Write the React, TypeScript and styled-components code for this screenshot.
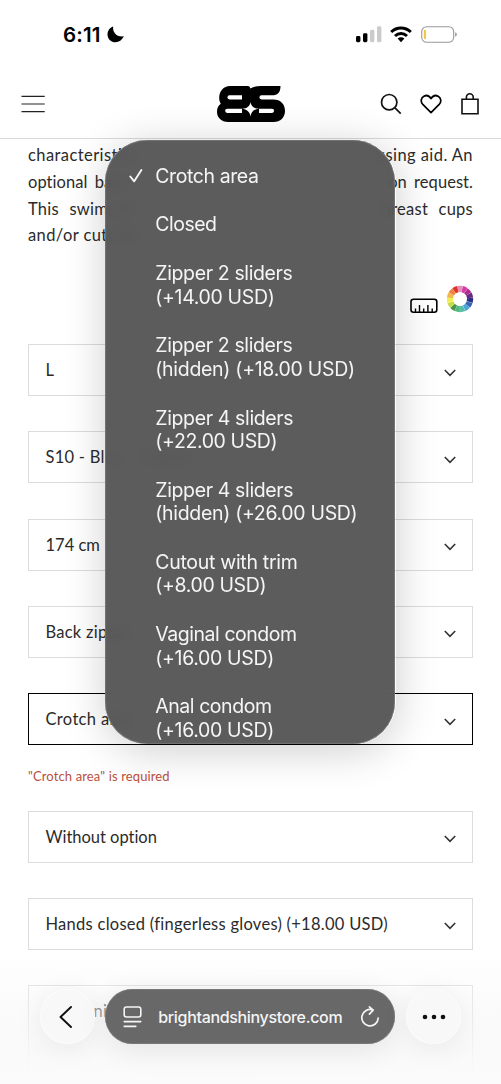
import React from "react";
import styled, { createGlobalStyle } from "styled-components";

const GlobalStyle = createGlobalStyle`
  * { box-sizing: border-box; }
  body { margin: 0; background: #fff; }
`;

const Screen = styled.main`
  position: relative;
  width: 501px;
  height: 1084px;
  overflow: hidden;
  background: #fff;
  color: #2b2b2b;
  font-family: Lato, "Noto Sans", sans-serif;
`;

const StatusBar = styled.div`
  display: flex;
  align-items: center;
  height: 69px;
  padding: 0 44.5px 0 63px;
`;

const Clock = styled.span`
  width: 43.5px;
  color: #000;
  font: 600 20.5px/24px Inter, sans-serif;
  letter-spacing: 0.15px;
`;

const StatusIcons = styled.div`
  display: flex;
  align-items: center;
  gap: 8.5px;
  margin-left: auto;
`;

const StoreHeader = styled.header`
  display: grid;
  grid-template-columns: 1fr 68px 1fr;
  align-items: center;
  height: 70px;
  padding: 0 21.5px 0 20.5px;
  border-bottom: 1px solid #dadada;
`;

const HeaderActions = styled.div`
  display: flex;
  justify-content: flex-end;
  align-items: center;
  gap: 18px;
`;

const Content = styled.section`
  padding: 3px 28px 0;
`;

const Description = styled.div`
  height: 107px;
`;

const DescriptionLine = styled.div<{ $space?: number; $track?: number }>`
  display: flex;
  justify-content: space-between;
  font-size: 16.5px;
  line-height: 26.75px;
  letter-spacing: ${(p) => p.$track ?? 0.25}px;
  word-spacing: ${(p) => p.$space ?? 0}px;
  white-space: nowrap;
`;

const Tools = styled.div`
  display: flex;
  justify-content: flex-end;
  align-items: flex-start;
  gap: 8.5px;
  height: 59.8px;
  margin: 35.5px -1px 0 0;
`;

const RulerSlot = styled.span`
  display: flex;
  padding-top: 13.5px;
`;

const Fields = styled.div`
  display: flex;
  flex-direction: column;
  gap: 35.2px;
`;

const Select = styled.div<{ $active?: boolean }>`
  display: flex;
  justify-content: space-between;
  align-items: center;
  height: 52px;
  padding: 0 16.5px;
  border: 1px solid ${(p) => (p.$active ? "#000" : "#dcdcdc")};
`;

const NoteBox = styled.div`
  height: 94px;
  padding: 13px 64.5px;
  border: 1px solid #dcdcdc;
`;

const Value = styled.span<{ $track?: number }>`
  font-size: 16.5px;
  line-height: 24px;
  letter-spacing: ${(p) => p.$track ?? 0.25}px;
  white-space: nowrap;
`;

const ChevronSlot = styled.span`
  display: flex;
  padding-top: 5px;
`;

const ErrorText = styled.p`
  margin: -12px 0 -10.2px;
  color: #b9503e;
  font-size: 13px;
  line-height: 17.4px;
  letter-spacing: 0.13px;
`;

const MenuShadow = styled.div`
  position: absolute;
  left: 105.5px;
  top: 140px;
  width: 290px;
  height: 604px;
  border-radius: 42px;
  box-shadow: 0 6px 44px rgba(0, 0, 0, 0.2);
`;

const Menu = styled.div`
  position: absolute;
  left: 105.3px;
  top: 140px;
  width: 290px;
  height: 604px;
  padding: 12px 20px 0 50px;
  overflow: hidden;
  border-radius: 42px;
  background: rgba(83, 83, 83, 0.95);
  backdrop-filter: blur(7px);
  box-shadow: inset 0 0 1px 0.5px #8a8a8a;
  color: #f5f5f5;
  font: 400 19.5px/23.4px Inter, sans-serif;
`;

const Option = styled.div`
  position: relative;
  padding: 12.7px 0;
  white-space: nowrap;
`;

const OptionLine = styled.div<{ $track: number }>`
  letter-spacing: ${(p) => p.$track}px;
`;

const Check = styled.svg`
  position: absolute;
  left: -26px;
  top: 16px;
`;

const BottomFade = styled.div`
  position: absolute;
  inset: 950px 0 0;
  background: linear-gradient(rgba(248, 248, 248, 0), rgba(247, 247, 247, 0.55) 45%, rgba(248, 248, 248, 0.85) 75%, rgba(251, 251, 251, 1) 96%);
`;

const BrowserBar = styled.nav`
  position: absolute;
  left: 39.5px;
  right: 40px;
  top: 989px;
  display: flex;
  justify-content: space-between;
  height: 55px;
`;

const RoundButton = styled.div`
  display: flex;
  align-items: center;
  justify-content: center;
  width: 55px;
  border-radius: 50%;
  background: #f8f8f8;
  box-shadow: 0 4px 28px rgba(0, 0, 0, 0.07), inset 0 0 1px 0.5px #fff;
`;

const AddressBar = styled.div`
  display: flex;
  align-items: center;
  width: 290px;
  padding: 0 15px 0 18px;
  border-radius: 28px;
  background: #686868;
  box-shadow: 0 5px 30px rgba(0, 0, 0, 0.09), inset 0 0 1px 0.5px #858585;
  color: #f5f5f5;
  font: 500 16px/22px Inter, sans-serif;
`;

const Domain = styled.span`
  flex: 1;
  margin-left: 16px;
  letter-spacing: -0.33px;
  white-space: nowrap;
`;

const Chevron = () => (
  <ChevronSlot>
    <svg width="12" height="8" viewBox="0 0 12 8" fill="none" stroke="#333" strokeWidth="1.6">
      <path d="M.8 1 6 6.3 11.2 1" />
    </svg>
  </ChevronSlot>
);

const Field = ({ label, track, active }: { label: string; track?: number; active?: boolean }) => (
  <Select $active={active}>
    <Value $track={track}>{label}</Value>
    <Chevron />
  </Select>
);

const wheelColors = ["#e68cba", "#d83aa5", "#a82c91", "#68297f", "#2d2f87", "#3567b3", "#49a4d9", "#54bda5", "#51b783", "#469747", "#c7d94b", "#f0ef4b", "#f2b64d", "#ed853e", "#df3429"];

const ColorWheel = () => {
  const step = 360 / wheelColors.length;
  const point = (r: number, deg: number) => {
    const a = ((deg - 90) * Math.PI) / 180;
    return `${14 + r * Math.cos(a)} ${14 + r * Math.sin(a)}`;
  };
  return (
    <svg width="28" height="28" viewBox="0 0 28 28">
      {wheelColors.map((c, i) => {
        const a = (i - 0.5) * step + 0.5;
        const b = (i + 0.5) * step - 0.5;
        return <path key={c} fill={c} d={`M${point(7, a)} L${point(13.2, a)} A13.2 13.2 0 0 1 ${point(13.2, b)} L${point(7, b)} A7 7 0 0 0 ${point(7, a)}Z`} />;
      })}
    </svg>
  );
};

const LogoMark = styled.svg`
  margin-left: 0.5px;
`;

const Logo = () => (
  <LogoMark width="68" height="36" viewBox="0 0 68 36">
    <path d="M13 0H31Q33 0 33.5 2.5Q37 0 44 0H63.5C63.5 6 61 9.2 56.5 9.2H44.5a2.1 2.1 0 0 0 0 4.2H56.5C63.5 13.4 68 18 68 24.7S63.5 36 56.5 36H11C4.5 36 0 31.8 0 25.8C0 22 1.3 19.5 3.8 17.8C2.7 16 2.2 14.2 2.2 12C2.2 5 6.5 0 13 0Z" />
    <path fill="#fff" d="M12.5 9.2H25V13.4H12.5a2.1 2.1 0 0 1 0-4.2ZM10.2 22.7H25V26.9H10.2a2.1 2.1 0 0 1 0-4.2ZM42 22.7H55a2.1 2.1 0 0 1 0 4.2H42ZM33.5 16C34 20 37 22.7 42 22.7C37 23.2 34 26 33.5 30.5C33 26 30 23.2 25 22.7C30 22.7 33 20 33.5 16Z" />
  </LogoMark>
);

type MenuOption = { lines: [string, number][]; selected?: boolean };

const options: MenuOption[] = [
  { lines: [["Crotch area", -0.42]], selected: true },
  { lines: [["Closed", -0.5]] },
  { lines: [["Zipper 2 sliders", -0.37], ["(+14.00 USD)", -0.35]] },
  { lines: [["Zipper 2 sliders", -0.37], ["(hidden) (+18.00 USD)", -0.3]] },
  { lines: [["Zipper 4 sliders", -0.37], ["(+22.00 USD)", -0.38]] },
  { lines: [["Zipper 4 sliders", -0.37], ["(hidden) (+26.00 USD)", -0.32]] },
  { lines: [["Cutout with trim", -0.3], ["(+8.00 USD)", -0.38]] },
  { lines: [["Vaginal condom", -0.46], ["(+16.00 USD)", -0.35]] },
  { lines: [["Anal condom", -0.45], ["(+16.00 USD)", -0.35]] },
];

export default function App() {
  return (
    <Screen>
      <GlobalStyle />
      <StatusBar>
        <Clock>6:11</Clock>
        <svg width="18" height="17" viewBox="0 0 18 17">
          <path d="M6.2.4C5.3 5.8 9.3 11.3 16.8 10.3C15 14.2 12 16.2 8.5 16.2C4 16.2.5 12.8.5 8.4C.5 4.7 2.7 1.5 6.2.4Z" />
        </svg>
        <StatusIcons>
          <svg width="26" height="17" viewBox="0 0 26 17">
            <rect x="0" y="10" width="4.4" height="6.2" rx="1.4" />
            <rect x="7" y="7.2" width="4.4" height="9" rx="1.4" />
            <rect x="14" y="3.7" width="4.4" height="12.5" rx="1.4" fill="#cbcbcb" />
            <rect x="21" y="0.3" width="4.4" height="15.9" rx="1.4" fill="#cbcbcb" />
          </svg>
          <svg width="22" height="17" viewBox="0 0 22 17" fill="none" stroke="#000" strokeWidth="3">
            <path d="M1.2 6C6.8.6 15.2.6 20.8 6" />
            <path d="M5 10C8.5 6.8 13.5 6.8 17 10" />
            <path d="M7.6 12.6C9.7 10.9 12.3 10.9 14.4 12.6L11 16.2Z" fill="#000" stroke="none" />
          </svg>
          <svg width="36" height="17" viewBox="0 0 36 17">
            <rect x=".7" y=".7" width="32" height="15.6" rx="5" fill="none" stroke="#999" strokeWidth="1.1" />
            <rect x="2.8" y="3.8" width="2.3" height="9.2" rx="1.1" fill="#f5c646" />
            <path d="M34.2 6.2Q35.8 6.6 35.8 8.5T34.2 10.8Z" fill="#999" />
          </svg>
        </StatusIcons>
      </StatusBar>
      <StoreHeader>
        <svg width="24" height="18" viewBox="0 0 24 18" stroke="#222" strokeWidth="1.2">
          <path d="M.5 1.4h23.2M.5 9h23.2M.5 16.6h23.2" />
        </svg>
        <Logo />
        <HeaderActions>
          <svg width="22" height="22" viewBox="0 0 22 22" fill="none" stroke="#111" strokeWidth="1.7">
            <circle cx="9.2" cy="9.2" r="7.7" />
            <path d="m14.7 14.7 6 6" />
          </svg>
          <svg width="22" height="20" viewBox="0 0 22 20" fill="none" stroke="#000" strokeWidth="1.7" strokeLinejoin="round">
            <path d="M11 18.6 2.8 10.4C.3 7.7.9 3.8 3.9 2.2C6.5.9 9.3 1.8 11 4.6C12.7 1.8 15.5.9 18.1 2.2C21.1 3.8 21.7 7.7 19.2 10.4Z" />
          </svg>
          <svg width="20" height="22" viewBox="0 0 20 22" fill="none" stroke="#111" strokeWidth="1.6">
            <path d="M2 6.2h16v14.5H2ZM6.4 6V4.2a3.4 3.4 0 0 1 6.8 0V6" />
          </svg>
        </HeaderActions>
      </StoreHeader>
      <Content>
        <Description>
          <DescriptionLine $track={0.42}><span>characteristics</span><span>using aid. An</span></DescriptionLine>
          <DescriptionLine $space={3} $track={0.05}><span>optional back</span><span>on request.</span></DescriptionLine>
          <DescriptionLine $space={6}><span>This swimsuit</span><span>breast cups</span></DescriptionLine>
          <DescriptionLine $track={0.4}><span>and/or cutouts</span></DescriptionLine>
        </Description>
        <Tools>
          <RulerSlot>
            <svg width="28" height="16" viewBox="0 0 28 16" fill="none" stroke="#000" strokeWidth="1.6">
              <rect x="1" y="1.2" width="25.8" height="13" rx="2.5" />
              <path d="M5.5 14v-3.5M9.5 14V7M13.7 14v-3.5M17.9 14V7M22.2 14v-3.5" strokeWidth="1.4" />
            </svg>
          </RulerSlot>
          <ColorWheel />
        </Tools>
        <Fields>
          <Field label="L" />
          <Field label="S10 - Blue – Classic" />
          <Field label="174 cm" track={0} />
          <Field label="Back zipper" />
          <Field label="Crotch area" track={0.35} active />
          <ErrorText>"Crotch area" is required</ErrorText>
          <Field label="Without option" track={-0.03} />
          <Field label="Hands closed (fingerless gloves) (+18.00 USD)" track={0.27} />
          <NoteBox><Value>ni</Value></NoteBox>
        </Fields>
      </Content>
      <BottomFade />
      <MenuShadow />
      <Menu>
        {options.map((option, i) => (
          <Option key={i}>
            {option.selected && (
              <Check width="14" height="16" viewBox="0 0 14 16" fill="none" stroke="#f5f5f5" strokeWidth="1.9" strokeLinecap="round" strokeLinejoin="round">
                <path d="m1.3 8.5 3.9 4.8L12.4 2" />
              </Check>
            )}
            {option.lines.map(([text, track]) => (
              <OptionLine key={text} $track={track}>{text}</OptionLine>
            ))}
          </Option>
        ))}
      </Menu>
      <BrowserBar>
        <RoundButton>
          <svg width="16" height="22" viewBox="0 0 16 22" fill="none" stroke="#111" strokeWidth="1.9" strokeLinecap="round" strokeLinejoin="round">
            <path d="M12 1 1.5 11 12 21" />
          </svg>
        </RoundButton>
        <AddressBar>
          <svg width="19" height="22" viewBox="0 0 19 22" fill="none" stroke="#f5f5f5" strokeWidth="1.6" strokeLinecap="round">
            <rect x="1.2" y="1" width="16.6" height="10" rx="2.2" />
            <path d="M1.2 15.6h16.6M1.2 20.4h11.6" />
          </svg>
          <Domain>brightandshinystore.com</Domain>
          <svg width="20" height="24" viewBox="0 0 20 24" fill="none" stroke="#f5f5f5" strokeWidth="1.7" strokeLinecap="round" strokeLinejoin="round">
            <path d="M12.8 5A8.2 8.2 0 1 0 18.2 13M9.4 1.8l3.8 3.3-3.8 4" />
          </svg>
        </AddressBar>
        <RoundButton>
          <svg width="24" height="6" viewBox="0 0 24 6" fill="#111">
            <circle cx="3" cy="3" r="2.3" /><circle cx="12" cy="3" r="2.3" /><circle cx="21" cy="3" r="2.3" />
          </svg>
        </RoundButton>
      </BrowserBar>
    </Screen>
  );
}
